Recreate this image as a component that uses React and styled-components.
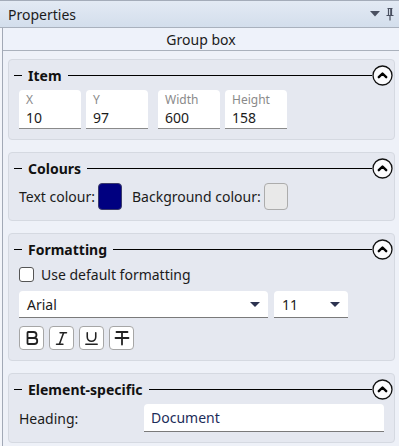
import React from 'react';
import styled, { createGlobalStyle } from 'styled-components';
import { Bold, Italic, Underline } from 'lucide-react';

const GlobalStyle = createGlobalStyle`
  body {
    margin: 0;
    background: #f3f5fa;
    font-family: "Noto Sans", "Open Sans", sans-serif;
    font-size: 14px;
    color: #1b1b1b;
  }
`;

const Window = styled.div`
  width: 399px;
  height: 446px;
  overflow: hidden;
  display: flex;
  flex-direction: column;
`;

const TitleBar = styled.div`
  height: 26px;
  flex: none;
  border-top: 1px solid #a4acb9;
  border-bottom: 1px solid #a9b1bd;
  background: linear-gradient(#e3eaf4, #d3deec);
  display: flex;
  align-items: center;
  justify-content: space-between;
  padding: 0 5px 0 8px;
  font-size: 14px;
`;

const TitleIcons = styled.div`
  display: flex;
  align-items: center;
  gap: 6px;
`;

const Dock = styled.div`
  flex: 1;
  margin-left: 2px;
  border-left: 1px solid #a2a9b6;
  background: #eef1f8;
  display: flex;
  flex-direction: column;
`;

const SubHeader = styled.div`
  height: 22px;
  flex: none;
  background: #eef2fa;
  border-bottom: 1px solid #aab1bc;
  display: flex;
  align-items: center;
  justify-content: center;
  font-size: 14px;
`;

const Content = styled.div`
  padding: 8px 4px 0 5px;
  display: flex;
  flex-direction: column;
  gap: 12px;
`;

const Section = styled.section`
  background: #e5e8f0;
  border: 1px solid #d5d9e1;
  border-radius: 4px;
  padding: 5px 1px 10px 0;
`;

const Legend = styled.div`
  height: 20px;
  display: flex;
  align-items: center;
  padding-left: 5px;
`;

const Dash = styled.span`
  width: 8px;
  height: 1px;
  background: #000;
`;

const LegendText = styled.span`
  font-weight: 700;
  font-size: 14px;
  margin: 0 6px;
  color: #111;
`;

const Rule = styled.span`
  flex: 1;
  height: 1px;
  background: #000;
`;

const SectionBody = styled.div`
  padding: 5px 0 0 10px;
  display: flex;
  flex-direction: column;
  gap: ${({ gap }) => gap || 0}px;
`;

const Row = styled.div`
  display: flex;
  align-items: center;
  gap: ${({ gap }) => gap || 0}px;
`;

const Field = styled.div`
  width: 62px;
  height: 39px;
  box-sizing: border-box;
  background: #fff;
  border-radius: 4px 4px 0 0;
  border-bottom: 1px solid #8a8a8a;
  padding: 1px 7px 0;
  margin-right: ${({ wide }) => (wide ? 10 : 5)}px;
  display: flex;
  flex-direction: column;
`;

const FieldLabel = styled.span`
  font-size: 12px;
  color: #8a8a8a;
  line-height: 17px;
`;

const FieldValue = styled.span`
  font-size: 14px;
  line-height: 19px;
`;

const Label = styled.span`
  font-size: 14px;
  width: ${({ width }) => (width ? `${width}px` : 'auto')};
`;

const Swatch = styled.span`
  width: 24px;
  height: 27px;
  box-sizing: border-box;
  border-radius: 4px;
  border: 1px solid ${({ color }) => (color === '#000080' ? '#3a3a6a' : '#acacac')};
  background: ${({ color }) => color};
  margin: 0 10px 0 3px;
`;

const Check = styled.span`
  width: 15px;
  height: 15px;
  box-sizing: border-box;
  border: 1px solid #555;
  border-radius: 3px;
  background: #fff;
  margin-right: 7px;
`;

const Select = styled.div`
  width: ${({ width }) => width}px;
  height: 27px;
  box-sizing: border-box;
  background: #fff;
  border-radius: 4px 4px 0 0;
  border-bottom: 1px solid #7a7a7a;
  padding: 0 8px;
  display: flex;
  align-items: center;
  justify-content: space-between;
  font-size: 14px;
  margin-right: 6px;
`;

const Caret = styled.span`
  width: 0;
  height: 0;
  border-left: 5px solid transparent;
  border-right: 5px solid transparent;
  border-top: 5px solid #2c3350;
`;

const ToolButton = styled.button`
  width: 25px;
  height: 24px;
  box-sizing: border-box;
  padding: 0;
  border: 1px solid #a6a6a6;
  border-radius: 4px;
  background: #fff;
  display: flex;
  align-items: center;
  justify-content: center;
  color: #222;
`;

const TextInput = styled.div`
  flex: 1;
  height: 28px;
  box-sizing: border-box;
  background: #fff;
  border-radius: 4px 4px 0 0;
  border-bottom: 1px solid #7a7a7a;
  padding: 0 7px;
  display: flex;
  align-items: center;
  font-size: 14px;
  color: #1c2c5a;
  margin-right: 9px;
`;

const CollapseIcon = () => (
  <svg width="21" height="21" viewBox="0 0 21 21">
    <circle cx="10.5" cy="10.5" r="9.5" fill="#fbfbfd" stroke="#111" strokeWidth="1.3" />
    <path d="M6.8 12.2 L10.5 8.5 L14.2 12.2" fill="none" stroke="#000" strokeWidth="2.4" strokeLinecap="round" strokeLinejoin="round" />
  </svg>
);

const StrikeT = () => (
  <svg width="18" height="18" viewBox="0 0 18 18" fill="none" stroke="#222" strokeWidth="1.8" strokeLinecap="round">
    <path d="M3.5 3 H14.5 M9 3 V15.5" />
    <path d="M2.5 9 H15.5" />
  </svg>
);

const Group = ({ title, children }) => (
  <Section>
    <Legend>
      <Dash />
      <LegendText>{title}</LegendText>
      <Rule />
      <CollapseIcon />
    </Legend>
    {children}
  </Section>
);

const coords = [
  { label: 'X', value: '10' },
  { label: 'Y', value: '97', wide: true },
  { label: 'Width', value: '600' },
  { label: 'Height', value: '158' },
];

export default function App() {
  return (
    <Window>
      <GlobalStyle />
      <TitleBar>
        <span>Properties</span>
        <TitleIcons>
          <svg width="10" height="6" viewBox="0 0 10 6">
            <path d="M0 0 H10 L5 5.5 Z" fill="#4a5060" />
          </svg>
          <svg width="8" height="13" viewBox="0 0 8 13">
            <path d="M1.5 0.5 H6.5 M2.5 0.5 V7 M5.5 0.5 V7 M0.5 7.5 H7.5 M4 7.5 V12.5" stroke="#4a5060" strokeWidth="1.2" fill="none" />
            <rect x="4.2" y="1" width="1.6" height="6" fill="#4a5060" />
          </svg>
        </TitleIcons>
      </TitleBar>
      <Dock>
        <SubHeader>Group box</SubHeader>
        <Content>
          <Group title="Item">
            <SectionBody>
              <Row>
                {coords.map((c) => (
                  <Field key={c.label} wide={c.wide}>
                    <FieldLabel>{c.label}</FieldLabel>
                    <FieldValue>{c.value}</FieldValue>
                  </Field>
                ))}
              </Row>
            </SectionBody>
          </Group>

          <Group title="Colours">
            <SectionBody>
              <Row>
                <Label>Text colour:</Label>
                <Swatch color="#000080" />
                <Label>Background colour:</Label>
                <Swatch color="#e9e9e9" />
              </Row>
            </SectionBody>
          </Group>

          <Group title="Formatting">
            <SectionBody gap={7}>
              <Row style={{ height: 20 }}>
                <Check />
                <Label>Use default formatting</Label>
              </Row>
              <Row>
                <Select width={249}>
                  <span>Arial</span>
                  <Caret />
                </Select>
                <Select width={74}>
                  <span>11</span>
                  <Caret />
                </Select>
              </Row>
              <Row gap={5} style={{ marginTop: 1 }}>
                <ToolButton><Bold size={18} strokeWidth={2.4} /></ToolButton>
                <ToolButton><Italic size={17} strokeWidth={2.2} /></ToolButton>
                <ToolButton><Underline size={17} strokeWidth={2.2} /></ToolButton>
                <ToolButton><StrikeT /></ToolButton>
              </Row>
            </SectionBody>
          </Group>

          <Group title="Element-specific">
            <SectionBody>
              <Row>
                <Label width={125}>Heading:</Label>
                <TextInput>Document</TextInput>
              </Row>
            </SectionBody>
          </Group>
        </Content>
      </Dock>
    </Window>
  );
}
